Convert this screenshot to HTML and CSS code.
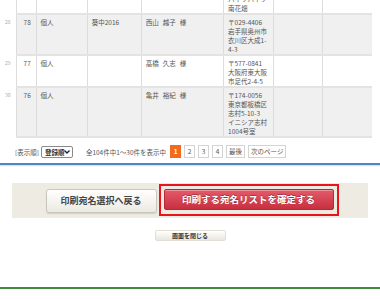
FILE: index.html
```html
<!DOCTYPE html>
<html lang="ja">
<head>
  <meta charset="UTF-8">
  <meta name="viewport" content="width=device-width, initial-scale=1.0">
  <title>宛名リスト確認</title>
  <link rel="stylesheet" href="styles.css">
</head>
<body>
  <div id="list">
    <table id="address-table">
      <colgroup>
        <col class="c-idx">
        <col class="c-no">
        <col class="c-type">
        <col class="c-group">
        <col class="c-name">
        <col class="c-addr">
        <col class="c-x">
        <col class="c-x">
      </colgroup>
      <tr>
        <td class="idx"></td>
        <td></td>
        <td></td>
        <td></td>
        <td></td>
        <td>ハイツハイツ<br>南花畑</td>
        <td></td>
        <td></td>
      </tr>
      <tr class="odd">
        <td class="idx">28</td>
        <td>78</td>
        <td>個人</td>
        <td>葵中2016</td>
        <td class="name">西山 越子 様</td>
        <td>〒029-4406<br>岩手県奥州市<br>衣川区大成1-<br>4-3</td>
        <td></td>
        <td></td>
      </tr>
      <tr>
        <td class="idx">29</td>
        <td>77</td>
        <td>個人</td>
        <td></td>
        <td class="name">髙橋 久志 様</td>
        <td>〒577-0841<br>大阪府東大阪<br>市足代2-4-5</td>
        <td></td>
        <td></td>
      </tr>
      <tr class="odd">
        <td class="idx">30</td>
        <td>76</td>
        <td>個人</td>
        <td></td>
        <td class="name">亀井 裕紀 様</td>
        <td>〒174-0056<br>東京都板橋区<br>志村5-10-3<br>イニシア志村<br>1004号室</td>
        <td></td>
        <td></td>
      </tr>
    </table>

    <div id="pager">
      <span class="sort-label">[表示順]</span>
      <span class="sort">
        <select id="sort">
          <option>登録順</option>
          <option>名前順</option>
        </select>
        <svg class="sort-arrow" width="6" height="4" viewBox="0 0 6 4"><path d="M0.5 0.5 L3 3 L5.5 0.5" fill="none" stroke="#222" stroke-width="1.4"/></svg>
      </span>
      <span class="count">全104件中1～30件を表示中</span>
      <ul class="pages">
        <li class="current">1</li>
        <li>2</li>
        <li>3</li>
        <li>4</li>
        <li>最後</li>
        <li>次のページ</li>
      </ul>
    </div>
  </div>

  <div id="actions">
    <div class="action-bar">
      <button class="btn-back">印刷宛名選択へ戻る</button>
      <div class="confirm-frame">
        <button class="btn-confirm">印刷する宛名リストを確定する</button>
      </div>
    </div>
    <button class="btn-close">画面を閉じる</button>
  </div>

  <div id="footer-line"></div>
</body>
</html>
```

FILE: styles.css
```css
body {
  margin: 0;
  padding: 0;
  background-color: #ffffff;
  font-family: "Noto Sans CJK JP", "Noto Sans", sans-serif;
  color: #555;
  overflow: hidden;
}
#list {
  border-bottom: 2px solid #4f86c6;
  box-shadow: 0 1px 1px rgba(0, 0, 0, 0.12);
  padding-bottom: 5px;
}
#address-table {
  margin-top: -8px;
  width: 372px;
  table-layout: fixed;
  border-collapse: collapse;
  font-size: 6.5px;
  line-height: 9px;
}
.c-idx { width: 16px; }
.c-no { width: 20px; }
.c-type { width: 51px; }
.c-group { width: 54px; }
.c-name { width: 82px; }
.c-addr { width: 50px; }
.c-x { width: 49px; }
#address-table td {
  vertical-align: top;
  padding: 3px 2px 0 4px;
  border-left: 1px solid #dcdcdc;
  border-bottom: 2px solid #e3e3e3;
  white-space: nowrap;
  overflow: hidden;
}
#address-table tr.odd td {
  background-color: #f0f0f0;
}
#address-table td.idx,
#address-table tr.odd td.idx {
  background-color: #ffffff;
  border: none;
  padding: 4px 0 0 5px;
  font-size: 5px;
  line-height: 8px;
  color: #aaa;
}
#address-table td:nth-child(2) {
  padding-left: 7px;
}
#address-table td.name {
  word-spacing: 2.5px;
}
#pager {
  display: flex;
  align-items: center;
  height: 13px;
  margin-top: 7px;
  padding-left: 15px;
  font-size: 6.5px;
}
.sort-label {
  margin-right: 2px;
}
.sort {
  position: relative;
  display: inline-block;
  width: 32px;
  height: 12px;
}
#sort {
  appearance: none;
  -webkit-appearance: none;
  display: block;
  width: 32px;
  height: 12px;
  margin: 0;
  padding: 0 0 0 3px;
  font-family: inherit;
  font-size: 6.5px;
  font-weight: bold;
  color: #333;
  border: 1px solid #8a8a8a;
  border-radius: 2px;
  background: #fff;
}
.sort-arrow {
  position: absolute;
  right: 3px;
  top: 4px;
  pointer-events: none;
}
.count {
  margin-left: 13px;
  margin-right: 4px;
}
.pages {
  display: flex;
  gap: 3px;
  margin: 0;
  padding: 0;
  list-style: none;
}
.pages li {
  height: 11px;
  line-height: 11px;
  padding: 0 2px;
  min-width: 5px;
  text-align: center;
  border: 1px solid #d4d4d4;
  background: #fff;
  color: #555;
}
.pages li.current {
  background: #f26b1d;
  border-color: #f26b1d;
  color: #fff;
  font-weight: bold;
}
#actions {
  display: flex;
  flex-direction: column;
  align-items: center;
  margin-top: 18px;
}
.action-bar {
  display: flex;
  justify-content: center;
  align-items: center;
  gap: 2px;
  width: 356px;
  height: 35px;
  padding-left: 4px;
  box-sizing: border-box;
  background-color: #eeebe2;
}
.btn-back {
  width: 111px;
  height: 24px;
  padding: 0;
  border: 1px solid #c9c6bc;
  border-radius: 3px;
  background: linear-gradient(#ffffff, #ebe9e2);
  box-shadow: 0 1px 1px rgba(0, 0, 0, 0.12);
  font-family: inherit;
  font-size: 9px;
  font-weight: bold;
  color: #444;
}
.confirm-frame {
  padding: 3px 3px 4px;
  border: 2px solid #e8161c;
  margin-top: -2px;
}
.btn-confirm {
  display: block;
  width: 170px;
  height: 21px;
  padding: 0;
  border: 1px solid #b3283a;
  border-radius: 2px;
  background: linear-gradient(#e45a6a, #c8303f);
  box-shadow: inset 0 1px 0 rgba(255, 255, 255, 0.35);
  font-family: inherit;
  font-size: 9.5px;
  font-weight: bold;
  color: #fff;
  text-shadow: 0 -1px 0 rgba(0, 0, 0, 0.3);
}
.btn-close {
  width: 71px;
  height: 11px;
  margin-top: 12px;
  padding: 0;
  border: 1px solid #e2ded4;
  border-radius: 2px;
  background: linear-gradient(#ffffff, #e9e6dd);
  font-family: inherit;
  font-size: 6px;
  line-height: 9px;
  font-weight: bold;
  color: #333;
}
#footer-line {
  margin-top: 46px;
  border-top: 2px solid #3f8a3f;
}
```
